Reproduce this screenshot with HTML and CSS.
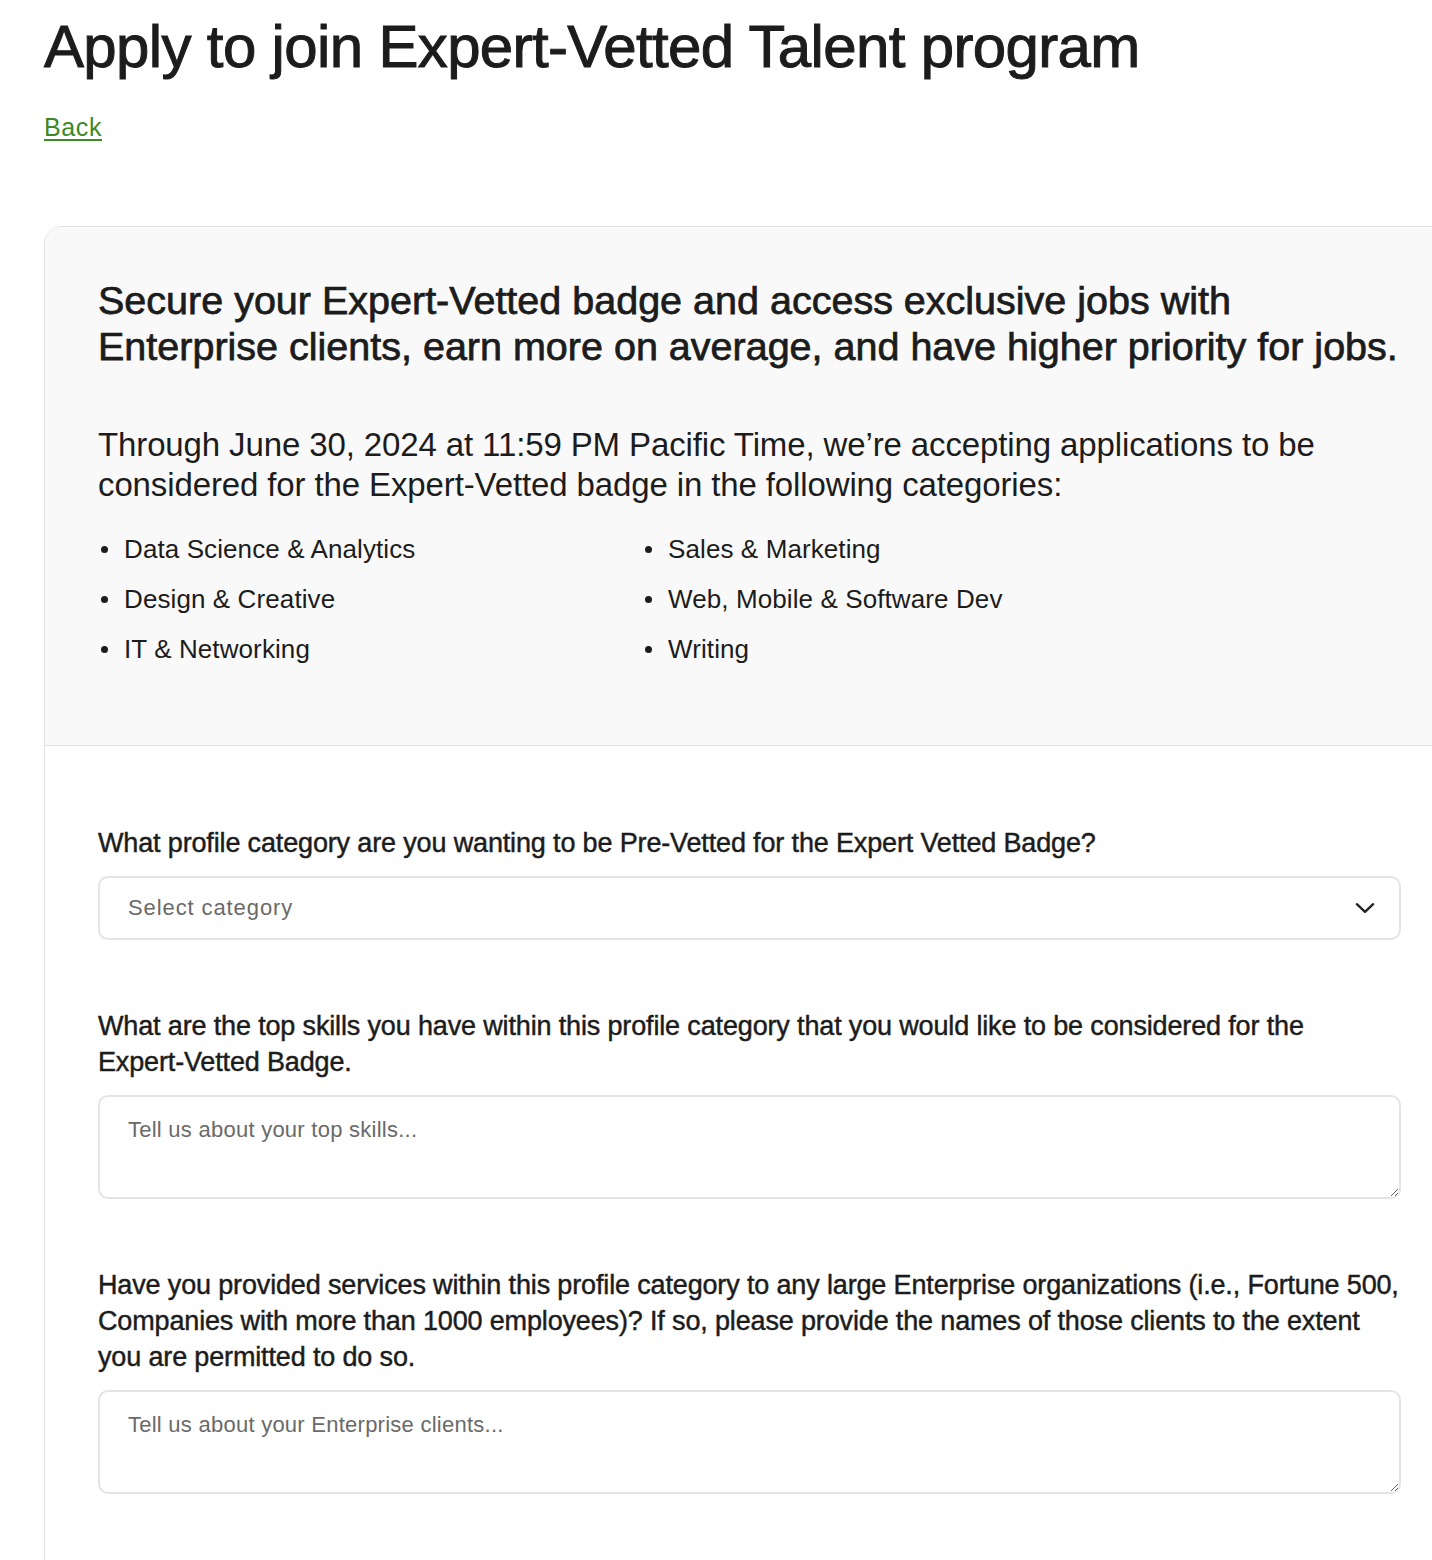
FILE: index.html
```html
<!DOCTYPE html>
<html lang="en">
<head>
<meta charset="utf-8">
<title>Apply to join Expert-Vetted Talent program</title>
<link rel="stylesheet" href="styles.css">
</head>
<body>
<main class="page">
  <h1 class="title">Apply to join Expert-Vetted Talent program</h1>
  <a class="back" href="#">Back</a>

  <section class="card">
    <div class="intro">
      <h2 class="intro-heading">Secure your Expert-Vetted badge and access exclusive jobs with Enterprise clients, earn more on average, and have higher priority for jobs.</h2>
      <p class="intro-text">Through June 30, 2024 at 11:59 PM Pacific Time, we’re accepting applications to be considered for the Expert-Vetted badge in the following categories:</p>
      <ul class="cats">
        <li>Data Science &amp; Analytics</li>
        <li>Sales &amp; Marketing</li>
        <li>Design &amp; Creative</li>
        <li>Web, Mobile &amp; Software Dev</li>
        <li>IT &amp; Networking</li>
        <li>Writing</li>
      </ul>
    </div>

    <form class="form">
      <div class="field">
        <label class="label" for="cat">What profile category are you wanting to be Pre-Vetted for the Expert Vetted Badge?</label>
        <div class="select" id="cat">
          <span class="select-text">Select category</span>
          <svg class="chev" width="26" height="26" viewBox="0 0 24 24" fill="none"><path d="M4.5 8.5l7.5 7 7.5-7" stroke="#222" stroke-width="2.2" stroke-linecap="round" stroke-linejoin="round"/></svg>
        </div>
      </div>

      <div class="field">
        <label class="label" for="skills">What are the top skills you have within this profile category that you would like to be considered for the <span class="nowrap">Expert-Vetted</span> Badge.</label>
        <textarea id="skills" class="area" placeholder="Tell us about your top skills..."></textarea>
      </div>

      <div class="field">
        <label class="label" for="clients">Have you provided services within this profile category to any large Enterprise organizations (i.e., Fortune 500, Companies with more than 1000 employees)? If so, please provide the names of those clients to the extent you are permitted to do so.</label>
        <textarea id="clients" class="area" placeholder="Tell us about your Enterprise clients..."></textarea>
      </div>
    </form>
  </section>
</main>
</body>
</html>
```

FILE: styles.css
```css
* { box-sizing: border-box; }

html, body {
  margin: 0;
  padding: 0;
  background: #fff;
  overflow-x: hidden;
}

body {
  font-family: "Liberation Sans", Arial, sans-serif;
  color: #1c1c1c;
}

.page {
  padding: 0 0 0 44px;
}

.title {
  margin: 0;
  padding-top: 12px;
  font-size: 60px;
  line-height: 70px;
  font-weight: 400;
  letter-spacing: -0.65px;
  -webkit-text-stroke: 1px #1c1c1c;
  color: #1c1c1c;
}

.back {
  display: block;
  width: fit-content;
  margin-top: 30px;
  font-size: 25px;
  line-height: 30px;
  color: #3b8a26;
  text-decoration: underline;
  text-underline-offset: 3px;
  letter-spacing: 0.6px;
}

.card {
  margin-top: 84px;
  width: 1411px;
  border: 1px solid #e2e2e2;
  border-radius: 18px;
  overflow: hidden;
}

.intro {
  background: #f9f9f9;
  border-bottom: 1px solid #e2e2e2;
  padding: 50px 53px 0;
  height: 519px;
}

.intro-heading {
  margin: 0;
  font-size: 39.5px;
  line-height: 46px;
  font-weight: 400;
  letter-spacing: 0;
  -webkit-text-stroke: 0.75px #1c1c1c;
  color: #1c1c1c;
}

.intro-text {
  margin: 56px 0 0;
  font-size: 33px;
  line-height: 40px;
  letter-spacing: -0.12px;
}

.cats {
  list-style: none;
  margin: 26px 0 0;
  padding: 0;
  display: grid;
  grid-template-columns: 544px 1fr;
  row-gap: 14px;
}

.cats li {
  position: relative;
  padding-left: 26px;
  font-size: 26px;
  line-height: 36px;
  letter-spacing: 0.1px;
}

.cats li::before {
  content: "";
  position: absolute;
  left: 3px;
  top: 15px;
  width: 7px;
  height: 7px;
  border-radius: 50%;
  background: #1c1c1c;
}

.form {
  padding: 79px 53px 140px;
  display: flex;
  flex-direction: column;
  gap: 68px;
}

.field {
  display: flex;
  flex-direction: column;
}

.label {
  display: block;
  font-size: 27px;
  line-height: 36px;
  letter-spacing: -0.15px;
  -webkit-text-stroke: 0.45px #1c1c1c;
  margin-bottom: 15px;
}

.nowrap {
  white-space: nowrap;
}

.select {
  width: 1303px;
  height: 64px;
  border: 2px solid #e4e4e4;
  border-radius: 10px;
  display: flex;
  align-items: center;
  justify-content: space-between;
  padding: 0 21px 0 28px;
  background: #fff;
}

.select-text {
  font-size: 22px;
  color: #6a6a6a;
  letter-spacing: 0.9px;
}

.area {
  display: block;
  width: 1303px;
  height: 104px;
  border: 2px solid #e4e4e4;
  border-radius: 10px;
  padding: 20px 28px;
  font-family: "Liberation Sans", Arial, sans-serif;
  font-size: 22px;
  line-height: 26px;
  letter-spacing: 0.25px;
  color: #1c1c1c;
  resize: vertical;
  background: #fff;
}

.area::placeholder {
  color: #6a6a6a;
}
```
